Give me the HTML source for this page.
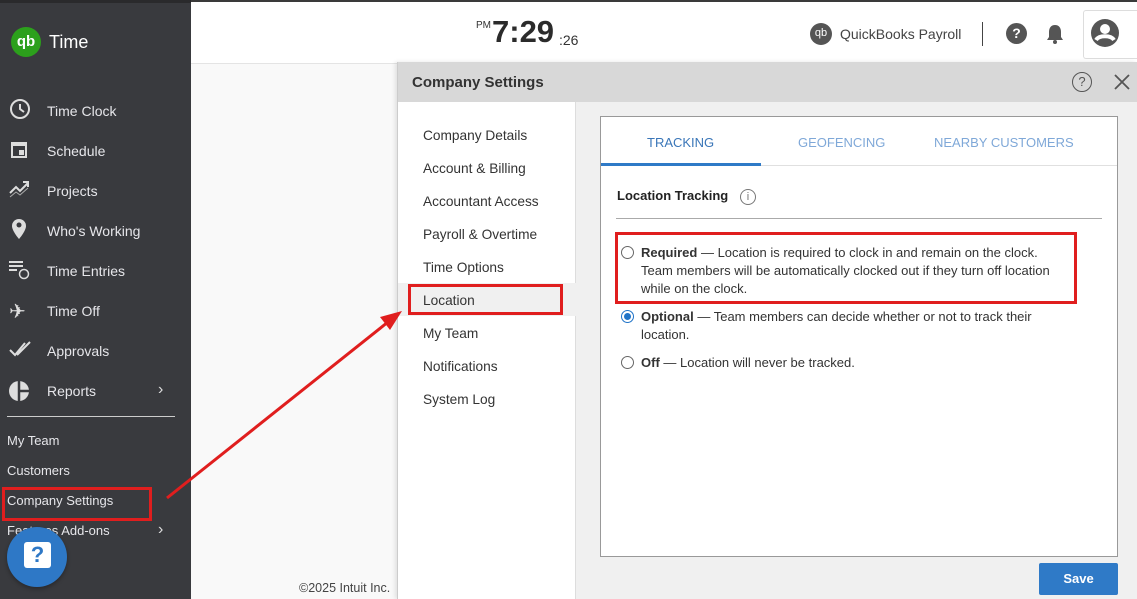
<!DOCTYPE html>
<html><head><style>
*{margin:0;padding:0;box-sizing:border-box}
body{width:1137px;height:599px;overflow:hidden;position:relative;font-family:"Liberation Sans",sans-serif;background:#f9f9f9;color:#333}
.abs{position:absolute}
#side{left:0;top:0;width:191px;height:599px;background:#393a3e;border-top:3px solid #2a2a2c}
.si{position:absolute;left:47px;font-size:14px;color:#e6e6ea;line-height:16px}
.ic{position:absolute;left:9px}
.li{position:absolute;left:7px;font-size:13px;color:#e6e6ea}
#hdr{left:191px;top:0;width:946px;height:64px;background:#fff;border-bottom:1px solid #e4e4e4;border-top:2px solid #3a3a3a}
.nav{position:absolute;left:25px;font-size:13.7px;color:#333}
</style></head><body>
<div id="side" class="abs">
 <div class="abs" style="left:11px;top:24px;width:30px;height:30px;border-radius:50%;background:#2ca01c;color:#fff;font-weight:bold;font-size:15px;text-align:center;line-height:29px">qb</div>
 <div class="abs" style="left:49px;top:29px;font-size:18px;color:#fff">Time</div>
 <svg class="ic" style="top:95px" width="22" height="22" viewBox="0 0 22 22"><circle cx="11" cy="11" r="9" fill="none" stroke="#ddd" stroke-width="2"/><path d="M11 6v5l4 3" stroke="#ddd" stroke-width="2" fill="none"/></svg>
 <div class="si" style="top:100px">Time Clock</div>
 <svg class="ic" style="top:135px" width="22" height="22" viewBox="0 0 22 22"><rect x="2" y="4" width="16" height="16" fill="#ddd"/><rect x="4" y="8" width="12" height="10" fill="#393a3e"/><rect x="10" y="12" width="5" height="5" fill="#ddd"/></svg>
 <div class="si" style="top:140px">Schedule</div>
 <svg class="ic" style="top:175px" width="22" height="22" viewBox="0 0 22 22"><path d="M1 15l6-6 4 4 8-8M14 4h5v5" stroke="#ddd" stroke-width="2" fill="none"/><path d="M1 19l6-5 4 3 8-7" stroke="#aaa" stroke-width="1" fill="none"/></svg>
 <div class="si" style="top:180px">Projects</div>
 <svg class="ic" style="top:215px" width="22" height="22" viewBox="0 0 22 22"><path d="M10 1a7 7 0 0 1 7 7c0 5-7 13-7 13S3 13 3 8a7 7 0 0 1 7-7z" fill="#ddd"/><circle cx="10" cy="7" r="2.5" fill="#393a3e"/></svg>
 <div class="si" style="top:220px">Who's Working</div>
 <svg class="ic" style="top:255px" width="22" height="22" viewBox="0 0 22 22"><path d="M0 4h14M0 8h14M0 12h8" stroke="#ddd" stroke-width="2"/><circle cx="15" cy="16" r="4.5" fill="none" stroke="#ddd" stroke-width="1.5"/></svg>
 <div class="si" style="top:260px">Time Entries</div>
 <div class="abs" style="left:9px;top:296px;color:#ddd;font-size:20px">✈</div>
 <div class="si" style="top:300px">Time Off</div>
 <svg class="ic" style="top:337px" width="24" height="20" viewBox="0 0 24 20"><path d="M1 10l5 5 10-12M8 15l13-13" stroke="#ddd" stroke-width="2" fill="none"/></svg>
 <div class="si" style="top:340px">Approvals</div>
 <svg class="ic" style="top:377px" width="22" height="22" viewBox="0 0 22 22"><circle cx="10" cy="11" r="10" fill="#ddd"/><path d="M10 1v20M10 11h10" stroke="#393a3e" stroke-width="2.5"/></svg>
 <div class="si" style="top:380px">Reports</div>
 <div class="abs" style="left:158px;top:378px;color:#ddd;font-size:16px">›</div>
 <div class="abs" style="left:7px;top:413px;width:168px;height:1px;background:#ccc"></div>
 <div class="li" style="top:430px">My Team</div>
 <div class="li" style="top:460px">Customers</div>
 <div class="li" style="top:490px">Company Settings</div>
 <div class="abs" style="left:2px;top:484px;width:150px;height:34px;border:3px solid #e01e1e"></div>
 <div class="li" style="top:520px">Features Add-ons</div>
 <div class="abs" style="left:158px;top:518px;color:#ddd;font-size:16px">›</div>
 <div class="abs" style="left:7px;top:524px;width:60px;height:60px;border-radius:50%;background:#2e78c6;box-shadow:0 2px 4px rgba(0,0,0,.3)"><div class="abs" style="left:17px;top:15px;width:27px;height:26px;background:#fff;border-radius:3px;color:#2e78c6;font-weight:bold;font-size:22px;text-align:center;line-height:26px">?</div></div>
</div>
<div id="hdr" class="abs">
 <div class="abs" style="left:285px;top:18px;font-size:10px;color:#333">PM</div>
 <div class="abs" style="left:301px;top:12px;font-size:31px;font-weight:bold;color:#2b2b2b">7:29</div>
 <div class="abs" style="left:368px;top:30px;font-size:14px;color:#333">:26</div>
 <div class="abs" style="left:619px;top:21px;width:22px;height:22px;border-radius:50%;background:#555;color:#fff;font-size:11px;text-align:center;line-height:21px">qb</div>
 <div class="abs" style="left:649px;top:24px;font-size:14px;color:#444">QuickBooks Payroll</div>
 <div class="abs" style="left:791px;top:20px;width:1px;height:24px;background:#444"></div>
 <div class="abs" style="left:815px;top:21px;width:21px;height:21px;border-radius:50%;background:#555;color:#fff;font-size:14px;font-weight:bold;text-align:center;line-height:21px">?</div>
 <svg class="abs" style="left:855px;top:21px" width="18" height="22" viewBox="0 0 18 22"><path d="M9 2c4 0 6 3 6 7v5l2 3H1l2-3V9c0-4 2-7 6-7z" fill="#555"/><circle cx="9" cy="19" r="2" fill="#555"/></svg>
 <div class="abs" style="left:892px;top:8px;width:54px;height:49px;border:1px solid #ddd;border-right:none;border-radius:3px 0 0 3px"></div>
 <svg class="abs" style="left:900px;top:17px" width="28" height="28" viewBox="0 0 28 28"><circle cx="14" cy="14" r="14" fill="#555"/><circle cx="14" cy="10" r="5" fill="#fff"/><path d="M5 21c3-5 15-5 18 0" stroke="#fff" stroke-width="4" fill="none"/></svg>
</div>
<div class="abs" style="left:299px;top:581px;font-size:12.5px;color:#444">©2025 Intuit Inc.</div>
<!-- modal -->
<div class="abs" style="left:397px;top:62px;width:740px;height:537px;background:#f0f0f0;border-left:1px solid #ccc;box-shadow:-2px 0 4px rgba(0,0,0,.1)">
 <div class="abs" style="left:0;top:0;width:740px;height:40px;background:#d8d8d8">
  <div class="abs" style="left:14px;top:12px;font-size:15px;font-weight:bold;color:#333">Company Settings</div>
  <div class="abs" style="left:674px;top:10px;width:20px;height:20px;border:1.5px solid #555;border-radius:50%;text-align:center;font-size:13px;line-height:17px;color:#555">?</div>
  <svg class="abs" style="left:716px;top:12px" width="16" height="16" viewBox="0 0 16 16"><path d="M1 1l14 14M15 1L1 15" stroke="#555" stroke-width="1.8"/></svg>
 </div>
 <div class="abs" style="left:0;top:40px;width:178px;height:497px;background:#fff;border-right:1px solid #ddd">
  <div class="nav" style="top:26px">Company Details</div>
  <div class="nav" style="top:59px">Account &amp; Billing</div>
  <div class="nav" style="top:92px">Accountant Access</div>
  <div class="nav" style="top:125px">Payroll &amp; Overtime</div>
  <div class="nav" style="top:158px">Time Options</div>
  <div class="abs" style="left:0;top:181px;width:178px;height:33px;background:#f0f0f0"></div>
  <div class="abs" style="left:10px;top:182px;width:155px;height:31px;border:3px solid #e01e1e"></div>
  <div class="nav" style="top:191px">Location</div>
  <div class="nav" style="top:224px">My Team</div>
  <div class="nav" style="top:257px">Notifications</div>
  <div class="nav" style="top:290px">System Log</div>
 </div>
 <div class="abs" style="left:202px;top:54px;width:518px;height:441px;background:#fff;border:1px solid #999">
  <div class="abs" style="left:0;top:0;width:516px;height:49px;border-bottom:1px solid #e0e0e0"></div>
  <div class="abs" style="left:0;top:46px;width:160px;height:3px;background:#2f7ac7"></div>
  <div class="abs" style="left:46px;top:18px;font-size:13px;color:#3a76b8">TRACKING</div>
  <div class="abs" style="left:197px;top:18px;font-size:13px;color:#7fa8d8">GEOFENCING</div>
  <div class="abs" style="left:333px;top:18px;font-size:13px;color:#7fa8d8">NEARBY CUSTOMERS</div>
  <div class="abs" style="left:16px;top:71px;font-size:13px;font-weight:bold;color:#222">Location Tracking</div>
  <div class="abs" style="left:139px;top:72px;width:16px;height:16px;border:1.3px solid #777;border-radius:50%;font-size:11px;text-align:center;line-height:14px;color:#777">i</div>
  <div class="abs" style="left:15px;top:101px;width:486px;height:1px;background:#aaa"></div>
  <div class="abs" style="left:14px;top:115px;width:462px;height:72px;border:3px solid #e01e1e"></div>
  <div class="abs" style="left:20px;top:129px;width:13px;height:13px;border:1px solid #666;border-radius:50%"></div>
  <div class="abs" style="left:40px;top:127px;font-size:13px;line-height:18px;color:#333;width:470px;white-space:nowrap"><b>Required</b> — Location is required to clock in and remain on the clock.<br>Team members will be automatically clocked out if they turn off location<br>while on the clock.</div>
  <div class="abs" style="left:20px;top:193px;width:13px;height:13px;border:1px solid #1f73c8;border-radius:50%"><div class="abs" style="left:2px;top:2px;width:7px;height:7px;border-radius:50%;background:#1f73c8"></div></div>
  <div class="abs" style="left:40px;top:191px;font-size:13px;line-height:18px;color:#333;width:470px;white-space:nowrap"><b>Optional</b> — Team members can decide whether or not to track their<br>location.</div>
  <div class="abs" style="left:20px;top:239px;width:13px;height:13px;border:1px solid #666;border-radius:50%"></div>
  <div class="abs" style="left:40px;top:237px;font-size:13px;line-height:18px;color:#333"><b>Off</b> — Location will never be tracked.</div>
 </div>
 <div class="abs" style="left:641px;top:501px;width:79px;height:32px;background:#2f7ac7;border-radius:2px;color:#fff;font-weight:bold;font-size:13px;text-align:center;line-height:32px">Save</div>
</div>
<svg class="abs" style="left:0;top:0" width="1137" height="599"><line x1="167" y1="498" x2="388" y2="322" stroke="#e01e1e" stroke-width="3"/><polygon points="402,311 380,317 390,330" fill="#e01e1e"/></svg>
</body></html>
